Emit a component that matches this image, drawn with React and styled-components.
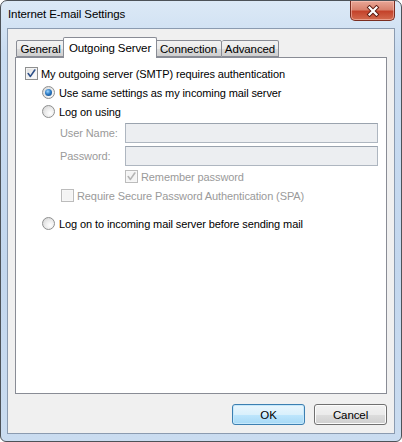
import React from "react";
import styled, { createGlobalStyle } from "styled-components";

const GlobalStyle = createGlobalStyle`
  html, body {
    margin: 0;
    padding: 0;
    background: #ffffff;
  }
  body {
    font-family: "Liberation Sans", Arial, sans-serif;
    font-size: 11px;
    color: #000;
  }
`;

const Window = styled.div`
  box-sizing: border-box;
  width: 402px;
  height: 442px;
  display: flex;
  flex-direction: column;
  padding: 0 6px 7px 6px;
  border: 1px solid #4d5258;
  border-radius: 7px 7px 6px 6px;
  background: linear-gradient(180deg, #dce9f6 0%, #c9dcf1 12%, #c3d7ee 60%, #cadcf0 100%);
`;

const TitleBar = styled.div`
  height: 27px;
  display: flex;
  justify-content: space-between;
  align-items: flex-start;
  flex-shrink: 0;
`;

const Title = styled.div`
  padding: 7px 0 0 1px;
  font-size: 11.5px;
  color: #000;
  letter-spacing: -0.1px;
`;

const CloseButton = styled.div`
  box-sizing: border-box;
  width: 45px;
  height: 20px;
  display: flex;
  align-items: center;
  justify-content: center;
  border: 1px solid #7a2d20;
  border-top: none;
  border-radius: 0 0 5px 5px;
  background: linear-gradient(180deg, #e9a797 0%, #d9826e 45%, #c4432b 55%, #d36b4f 100%);
  box-shadow: inset 0 0 0 1px rgba(255, 210, 200, 0.5);
`;

const Client = styled.div`
  flex: 1;
  display: flex;
  flex-direction: column;
  padding: 8px 7px 8px 7px;
  background: #f0f0f0;
  border: 1px solid #8b9bb0;
`;

const TabStrip = styled.div`
  height: 20px;
  display: flex;
  align-items: flex-end;
  padding-left: 1px;
  flex-shrink: 0;
`;

const Tab = styled.div`
  box-sizing: border-box;
  position: relative;
  width: ${(p) => p.$w}px;
  height: ${(p) => (p.$active ? 21 : 17)}px;
  margin: ${(p) => (p.$active ? "0 -2px -1px -2px" : "0")};
  z-index: ${(p) => (p.$active ? 2 : 1)};
  display: flex;
  align-items: center;
  justify-content: center;
  padding-bottom: ${(p) => (p.$active ? 1 : 0)}px;
  border: 1px solid #898c95;
  border-bottom: ${(p) => (p.$active ? "none" : "1px solid #898c95")};
  border-left: ${(p) => (p.$noLeft ? "none" : "1px solid #898c95")};
  border-radius: 2px 2px 0 0;
  background: ${(p) =>
    p.$active ? "#ffffff" : "linear-gradient(180deg, #f2f2f2 0%, #ebebeb 50%, #dddddd 51%, #cfcfcf 100%)"};
  white-space: nowrap;
  font-size: 11.5px;
  letter-spacing: -0.1px;
`;

const Panel = styled.div`
  flex: 1;
  display: flex;
  flex-direction: column;
  padding: 6px 8px 0 9px;
  background: #ffffff;
  border: 1px solid #898c95;
`;

const Row = styled.div`
  height: ${(p) => p.$h || 19}px;
  margin-left: ${(p) => p.$indent || 0}px;
  margin-top: ${(p) => p.$gap || 0}px;
  display: flex;
  align-items: center;
  flex-shrink: 0;
  white-space: nowrap;
  letter-spacing: -0.1px;
  color: ${(p) => (p.$disabled ? "#9a9a9a" : "#000")};
`;

const Box = styled.span`
  box-sizing: border-box;
  width: 13px;
  height: 13px;
  margin-right: 3px;
  flex-shrink: 0;
  display: flex;
  align-items: center;
  justify-content: center;
  border: 1px solid ${(p) => (p.$disabled ? "#bcbcbc" : "#8e8f8f")};
  background: ${(p) =>
    p.$disabled
      ? "#f4f4f4"
      : "linear-gradient(135deg, #dcdcdc 0%, #f4f4f4 60%, #ffffff 100%)"};
  box-shadow: inset 0 0 0 1px ${(p) => (p.$disabled ? "#f7f7f7" : "#f4f4f4")};
`;

const Radio = styled.span`
  box-sizing: border-box;
  position: relative;
  width: 13px;
  height: 13px;
  margin-right: 4px;
  flex-shrink: 0;
  border-radius: 50%;
  border: 1px solid #8e8f8f;
  background: radial-gradient(circle at 65% 65%, #ffffff 0%, #ececec 45%, #cfcfcf 100%);

  &::after {
    content: "";
    display: ${(p) => (p.$checked ? "block" : "none")};
    position: absolute;
    left: 2px;
    top: 2px;
    width: 7px;
    height: 7px;
    border-radius: 50%;
    background: radial-gradient(circle at 40% 35%, #9fd6ff 0%, #2c7cc6 45%, #0f3e78 100%);
  }
`;

const Label = styled.span`
  width: 65px;
  flex-shrink: 0;
  color: #9a9a9a;
`;

const Field = styled.div`
  box-sizing: border-box;
  flex: 1;
  height: 20px;
  border: 1px solid #aeb6c0;
  border-top-color: #9aa3ae;
  background: #eceef1;
`;

const ButtonRow = styled.div`
  display: flex;
  justify-content: flex-end;
  gap: 9px;
  margin-top: 10px;
  flex-shrink: 0;
`;

const Button = styled.div`
  box-sizing: border-box;
  width: 73px;
  height: 21px;
  display: flex;
  align-items: center;
  justify-content: center;
  border-radius: 3px;
  border: 1px solid ${(p) => (p.$primary ? "#3c7fb1" : "#707070")};
  background: ${(p) =>
    p.$primary
      ? "linear-gradient(180deg, #eaf6fd 0%, #d9f0fc 50%, #bee6fd 51%, #a7d9f5 100%)"
      : "linear-gradient(180deg, #f2f2f2 0%, #ebebeb 50%, #dddddd 51%, #cfcfcf 100%)"};
  box-shadow: inset 0 0 0 1px ${(p) => (p.$primary ? "#c6e8fb" : "#fcfcfc")};
  font-size: 11.5px;
  letter-spacing: -0.1px;
`;

const Check = ({ color = "#2d4f88" }) => (
  <svg width="9" height="9" viewBox="0 0 9 9">
    <path d="M1.2 4.6 L3.4 7.4 L7.8 1" fill="none" stroke={color} strokeWidth="1.6" strokeLinecap="round" strokeLinejoin="round" />
  </svg>
);

const CloseX = () => (
  <svg width="14" height="12" viewBox="0 0 14 12">
    <path d="M3.5 2.5 L10.5 9.5 M10.5 2.5 L3.5 9.5" stroke="#5a1a10" strokeWidth="4" strokeLinecap="square" />
    <path d="M3.5 2.5 L10.5 9.5 M10.5 2.5 L3.5 9.5" stroke="#ffffff" strokeWidth="2.2" strokeLinecap="square" />
  </svg>
);

export default function App() {
  return (
    <>
      <GlobalStyle />
      <Window>
        <TitleBar>
          <Title>Internet E-mail Settings</Title>
          <CloseButton>
            <CloseX />
          </CloseButton>
        </TitleBar>
        <Client>
          <TabStrip>
            <Tab $w={49}>General</Tab>
            <Tab $w={94} $active>Outgoing Server</Tab>
            <Tab $w={67}>Connection</Tab>
            <Tab $w={57} $noLeft>Advanced</Tab>
          </TabStrip>
          <Panel>
            <Row>
              <Box>
                <Check />
              </Box>
              My outgoing server (SMTP) requires authentication
            </Row>
            <Row $indent={17}>
              <Radio $checked />
              Use same settings as my incoming mail server
            </Row>
            <Row $indent={17}>
              <Radio />
              Log on using
            </Row>
            <Row $indent={35} $h={23}>
              <Label>User Name:</Label>
              <Field />
            </Row>
            <Row $indent={35} $h={23}>
              <Label>Password:</Label>
              <Field />
            </Row>
            <Row $indent={100} $disabled>
              <Box $disabled>
                <Check color="#b4b4b4" />
              </Box>
              Remember password
            </Row>
            <Row $indent={36} $disabled>
              <Box $disabled />
              Require Secure Password Authentication (SPA)
            </Row>
            <Row $indent={17} $gap={9}>
              <Radio />
              Log on to incoming mail server before sending mail
            </Row>
          </Panel>
          <ButtonRow>
            <Button $primary>OK</Button>
            <Button>Cancel</Button>
          </ButtonRow>
        </Client>
      </Window>
    </>
  );
}
